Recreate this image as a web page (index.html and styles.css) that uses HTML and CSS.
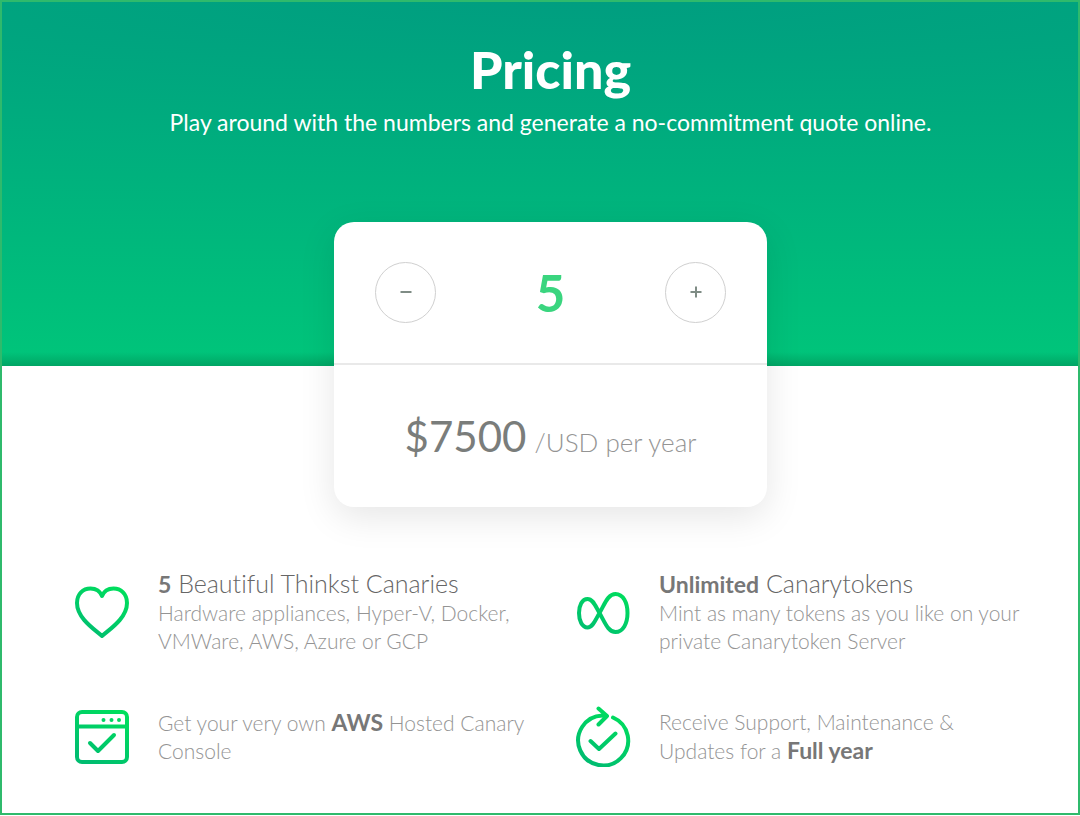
FILE: index.html
```html
<!DOCTYPE html>
<html lang="en">
<head>
<meta charset="utf-8">
<meta name="viewport" content="width=device-width, initial-scale=1">
<title>Pricing</title>
<link rel="stylesheet" href="styles.css">
</head>
<body class="page">
<svg class="defs" width="0" height="0" aria-hidden="true">
  <defs>
    <linearGradient id="green" gradientUnits="userSpaceOnUse" x1="46" y1="4" x2="14" y2="56">
      <stop offset="0" stop-color="#00e05c"/>
      <stop offset="1" stop-color="#00bd70"/>
    </linearGradient>
  </defs>
</svg>
<header class="hero">
  <h1 class="title">Pricing</h1>
  <p class="subtitle">Play around with the numbers and generate a no-commitment quote online.</p>
  <section class="card" aria-label="Quote">
    <div class="stepper">
      <button class="step" type="button" aria-label="Fewer">
        <svg width="12" height="12" viewBox="0 0 12 12"><path d="M0.5 6h11"/></svg>
      </button>
      <output class="count">5</output>
      <button class="step" type="button" aria-label="More">
        <svg width="12" height="12" viewBox="0 0 12 12"><path d="M0.5 6h11M6 0.5v11"/></svg>
      </button>
    </div>
    <p class="price"><span class="amount">$7500</span> <span class="unit">/USD per year</span></p>
  </section>
</header>
<main class="features">
  <article class="feature">
    <svg class="icon" width="56" height="62" viewBox="0 0 56 62"><path d="M28 55C20 48 3 37 3 22C3 13 9 7.500 16.500 7.500C22 7.500 26 10 28 15C30 10 34 7.500 39.500 7.500C47 7.500 53 13 53 22C53 37 36 48 28 55Z"/></svg>
    <div class="text">
      <h2 class="name"><b>5</b> Beautiful Thinkst Canaries</h2>
      <p class="note">Hardware appliances, Hyper-V, Docker,<br>VMWare, AWS, Azure or GCP</p>
    </div>
  </article>
  <article class="feature">
    <svg class="icon" width="56" height="62" viewBox="0 0 56 62"><path d="M24.500 32C20 24.500 18 18 12.500 18C7 18 4 24.500 4 32C4 39.500 7 46.500 12.500 46.500C18 46.500 20 39.500 24.500 32C30 22.500 33 13 40.500 13C48 13 52.500 21.500 52.500 32C52.500 42.500 48 51 40.500 51C33 51 30 41.500 24.500 32Z"/></svg>
    <div class="text">
      <h2 class="name"><b>Unlimited</b> Canarytokens</h2>
      <p class="note">Mint as many tokens as you like on your<br>private Canarytoken Server</p>
    </div>
  </article>
  <article class="feature">
    <svg class="icon" width="56" height="62" viewBox="0 0 56 62"><rect x="3" y="7" width="50" height="50" rx="5"/><path d="M3 21.500h50M16 38l8 8 16-16"/><path class="dots" d="M29.500 15h0M37.500 15h0M45 15h0"/></svg>
    <div class="text">
      <p class="note">Get your very own <b>AWS</b> Hosted Canary<br>Console</p>
    </div>
  </article>
  <article class="feature">
    <svg class="icon" width="56" height="62" viewBox="0 0 56 62"><path d="M38 12.500A25 25 0 1 1 27.500 10.500H31M23.500 3.500L32 11L23.500 19.500M15.500 36l8.500 8L40.500 28.500"/></svg>
    <div class="text">
      <p class="note">Receive Support, Maintenance &amp;<br>Updates for a <b>Full year</b></p>
    </div>
  </article>
</main>
</body>
</html>
```
FILE: styles.css
```css
* { box-sizing: border-box; }

.page {
  margin: 0;
  min-height: 815px;
  border: 2px solid #2fba6c;
  background: #fff;
  font-family: Lato, "Liberation Sans", sans-serif;
  font-variant-ligatures: none;
  color: #7a7a7a;
}

.defs { position: absolute; }

.hero {
  display: flex;
  flex-direction: column;
  align-items: center;
  padding: 35px 0 0 21px;
  background:
    linear-gradient(to top, rgba(0, 90, 50, 0.3), rgba(0, 90, 50, 0) 14px),
    radial-gradient(ellipse 360% 100% at 54% 0, #009e80, #00c57a);
  color: #fff;
}

.title {
  margin: 0;
  font-size: 52px;
  line-height: 64px;
  font-weight: 900;
}

.subtitle {
  margin: 7px 0 0;
  font-size: 23px;
  line-height: 28px;
}

.card {
  width: 433px;
  max-width: 100%;
  margin: 86px 0 -141px;
  border-radius: 20px;
  background: #fff;
  box-shadow: 0 10px 36px rgba(0, 0, 0, 0.1);
}

.stepper {
  display: flex;
  align-items: center;
  justify-content: space-between;
  height: 143px;
  padding: 0 41px;
  border-bottom: 2px solid #e9e9e9;
}

.step {
  display: grid;
  place-items: center;
  width: 61px;
  height: 61px;
  padding: 0 0 2px;
  border: 1px solid #d0d0d0;
  border-radius: 50%;
  background: #fff;
}

.step svg {
  fill: none;
  stroke: #7f8c85;
  stroke-width: 2;
}

.count {
  font-size: 51px;
  font-weight: 700;
  color: #3ad57f;
}

.price {
  margin: 0;
  padding: 42px 0 32px;
  line-height: 58px;
  text-align: center;
}

.amount { font-size: 42px; color: #7a7d7b; }

.unit {
  margin-left: 4px;
  font-size: 26px;
  font-weight: 300;
  color: #949494;
}

.features {
  display: grid;
  grid-template-columns: repeat(2, 1fr);
  row-gap: 38px;
  padding: 202px 2px 0 72px;
}

.feature {
  display: flex;
  align-items: center;
  gap: 28px;
  min-height: 86px;
}

.icon {
  flex: none;
  fill: none;
  stroke: url(#green);
  stroke-width: 4;
  stroke-linecap: round;
  stroke-linejoin: round;
}

.name {
  margin: 0;
  font-size: 25px;
  line-height: 30px;
  font-weight: 300;
  color: #666;
}

.note {
  margin: 0;
  font-size: 21px;
  line-height: 28px;
  font-weight: 300;
  color: #949494;
}

.name b, .note b {
  font-size: 23px;
  font-weight: 700;
  color: #777;
}
```
